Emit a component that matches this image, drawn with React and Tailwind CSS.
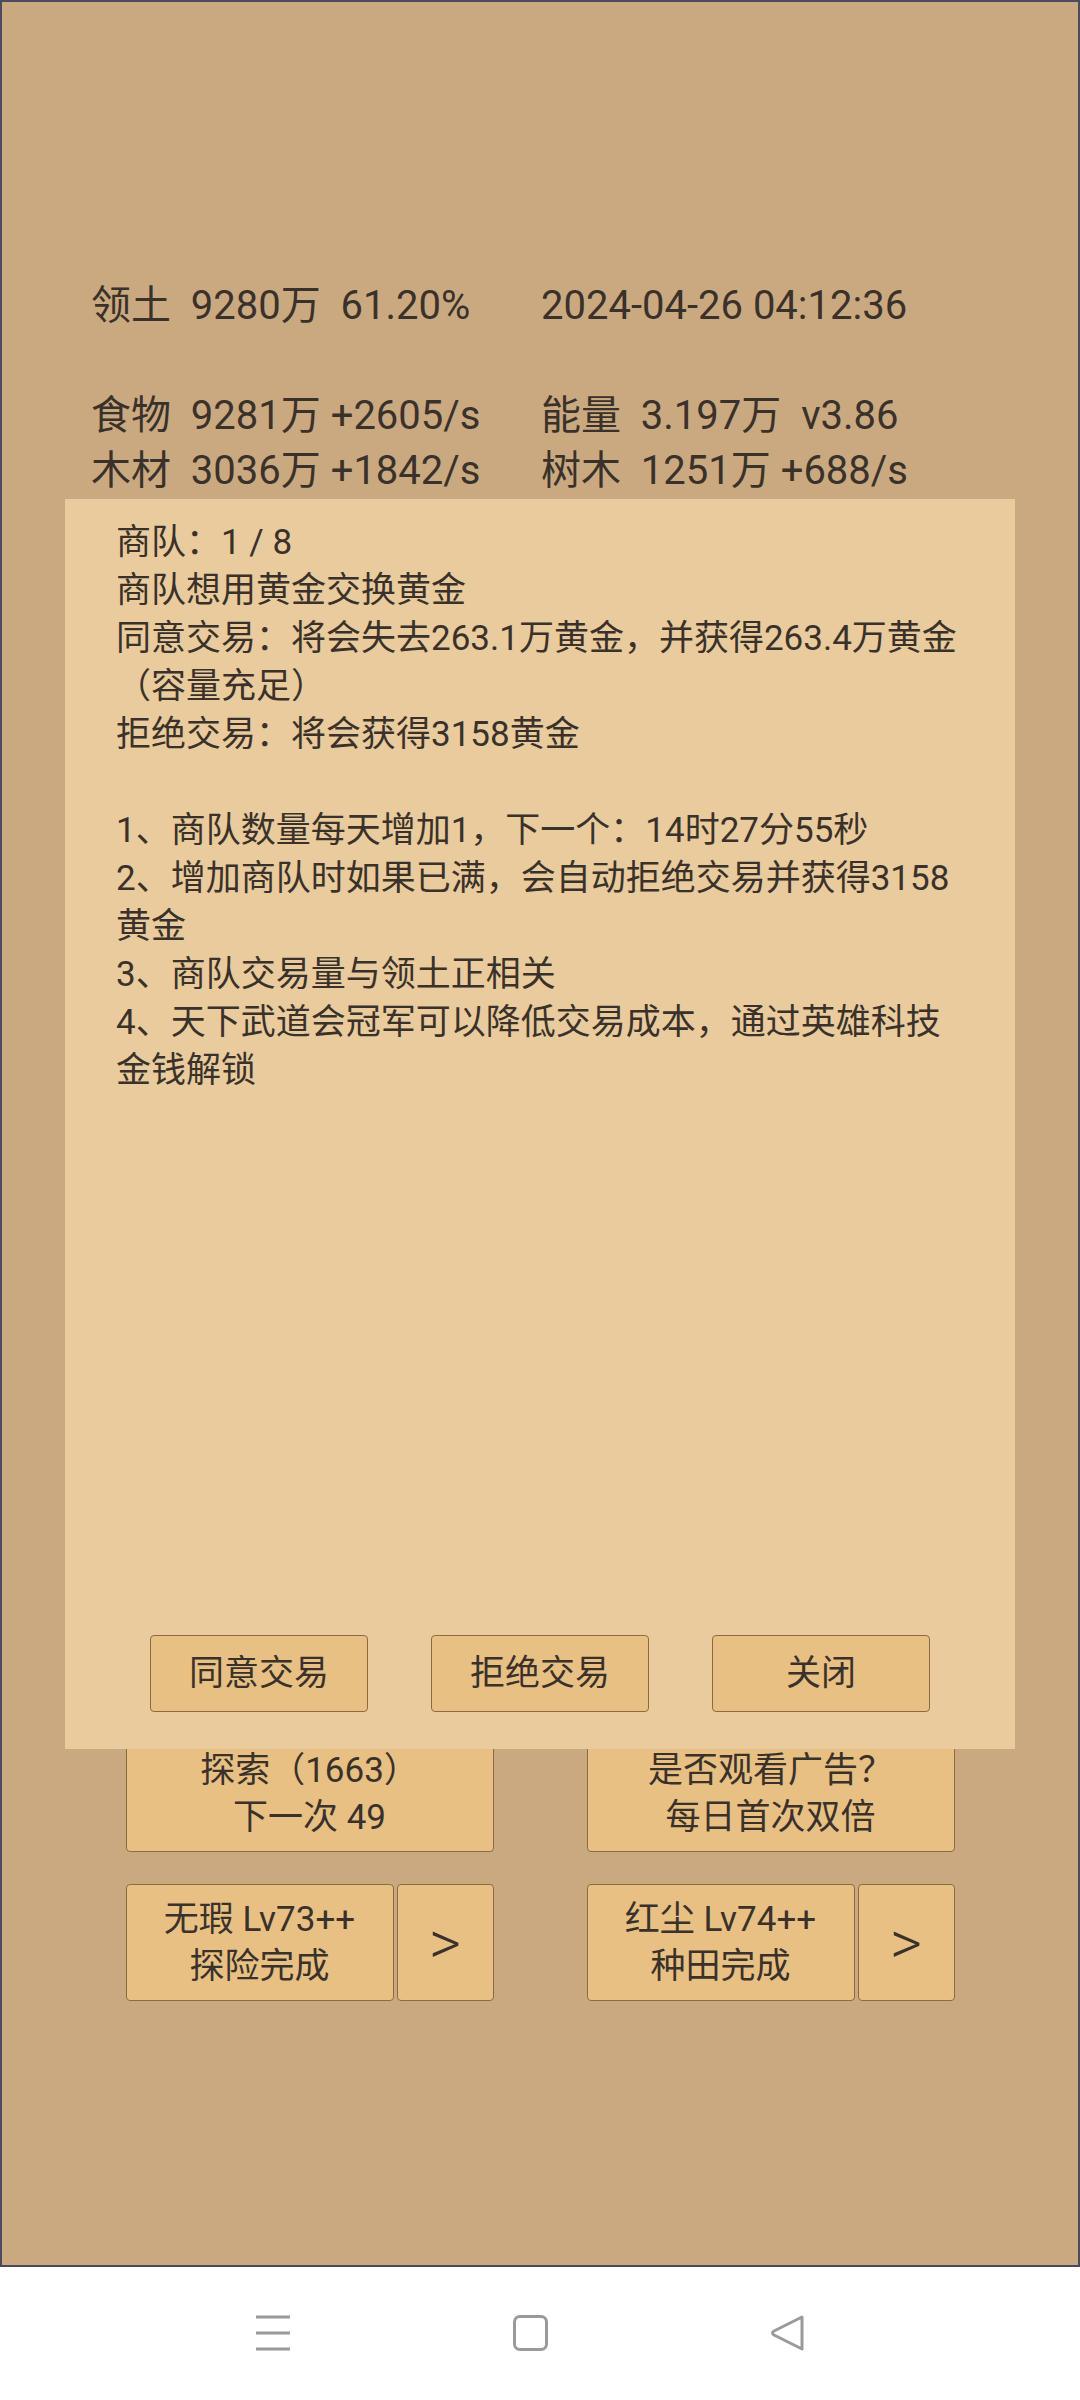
import React from "react";

const stats = [
    ["领土  9280万  61.20%", "2024-04-26 04:12:36"],
    ["", ""],
    ["食物  9281万 +2605/s", "能量  3.197万  v3.86"],
    ["木材  3036万 +1842/s", "树木  1251万 +688/s"],
];

const caravanLines = [
    "商队：1 / 8",
    "商队想用黄金交换黄金",
    "同意交易：将会失去263.1万黄金，并获得263.4万黄金",
    "（容量充足）",
    "拒绝交易：将会获得3158黄金",
    "",
    "1、商队数量每天增加1，下一个：14时27分55秒",
    "2、增加商队时如果已满，会自动拒绝交易并获得3158",
    "黄金",
    "3、商队交易量与领土正相关",
    "4、天下武道会冠军可以降低交易成本，通过英雄科技",
    "金钱解锁",
];

const btn =
    "border border-[#8c6c3e] rounded-[4px] bg-[#e8c084] text-[35px] leading-[47px] flex flex-col items-center justify-center";

function GameButton({ lines, className = "" }) {
    return (
        <div className={`${btn} ${className}`}>
            {lines.map((l, i) => (
                <span key={i} className="whitespace-pre">
                    {l}
                </span>
            ))}
        </div>
    );
}

function HeroButton({ lines }) {
    return (
        <div className="flex gap-[3px] w-[368px] h-[117px]">
            <GameButton lines={lines} className="flex-1" />
            <div className={`${btn} w-[97px] !text-[62px] font-light`}>&gt;</div>
        </div>
    );
}

function NavBar() {
    return (
        <div className="h-[133px] bg-white flex items-center justify-center gap-[222px] pb-[2px] pr-[20px]">
            <svg width="36" height="36" viewBox="0 0 36 36">
                <g stroke="#9a9a9a" strokeWidth="3">
                    <line x1="1" y1="2" x2="35" y2="2" />
                    <line x1="1" y1="18" x2="35" y2="18" />
                    <line x1="1" y1="34" x2="35" y2="34" />
                </g>
            </svg>
            <div className="w-[35px] h-[36px] rounded-[7px] border-[3px] border-[#9a9a9a]"></div>
            <svg width="36" height="36" viewBox="0 0 36 36">
                <path
                    d="M32 2 L4 16 Q1 18 4 20 L32 34 Z"
                    fill="none"
                    stroke="#9a9a9a"
                    strokeWidth="3"
                    strokeLinejoin="round"
                />
            </svg>
        </div>
    );
}

export default function App() {
    return (
        <div className="w-[1080px] h-[2400px] bg-white flex flex-col font-['Roboto','Noto_Sans_CJK_SC',sans-serif] text-[#3a322a]">
            <div className="relative h-[2267px] bg-[#caa981] border-2 border-[#4b4b60]">
                <div className="pt-[276px] pl-[89px] grid grid-cols-[450px_450px] text-[40px] leading-[55px]">
                    {stats.map((row, i) =>
                        row.map((cell, j) => (
                            <div key={`${i}-${j}`} className="whitespace-pre h-[55px]">
                                {cell}
                            </div>
                        ))
                    )}
                </div>

                <div className="mt-[1237px] flex flex-col gap-[32px]">
                    <div className="flex justify-center gap-[93px]">
                        <GameButton lines={["探索（1663）", "下一次 49"]} className="w-[368px] h-[117px]" />
                        <GameButton lines={["是否观看广告？", "每日首次双倍"]} className="w-[368px] h-[117px]" />
                    </div>
                    <div className="flex justify-center gap-[93px]">
                        <HeroButton lines={["无瑕 Lv73++", "探险完成"]} />
                        <HeroButton lines={["红尘 Lv74++", "种田完成"]} />
                    </div>
                </div>

                {/* caravan dialog */}
                <div className="absolute left-[63px] top-[497px] w-[950px] h-[1250px] bg-[#e9cb9d] flex flex-col pt-[20px] pl-[51px] pb-[37px]">
                    <div className="text-[35px] leading-[48px]">
                        {caravanLines.map((l, i) => (
                            <div key={i} className="whitespace-pre h-[48px]">
                                {l}
                            </div>
                        ))}
                    </div>
                    <div className="mt-auto -ml-[51px] flex justify-center gap-[63px]">
                        {["同意交易", "拒绝交易", "关闭"].map((t) => (
                            <div key={t} className={`${btn} w-[218px] h-[77px]`}>
                                {t}
                            </div>
                        ))}
                    </div>
                </div>
            </div>
            <NavBar />
        </div>
    );
}
